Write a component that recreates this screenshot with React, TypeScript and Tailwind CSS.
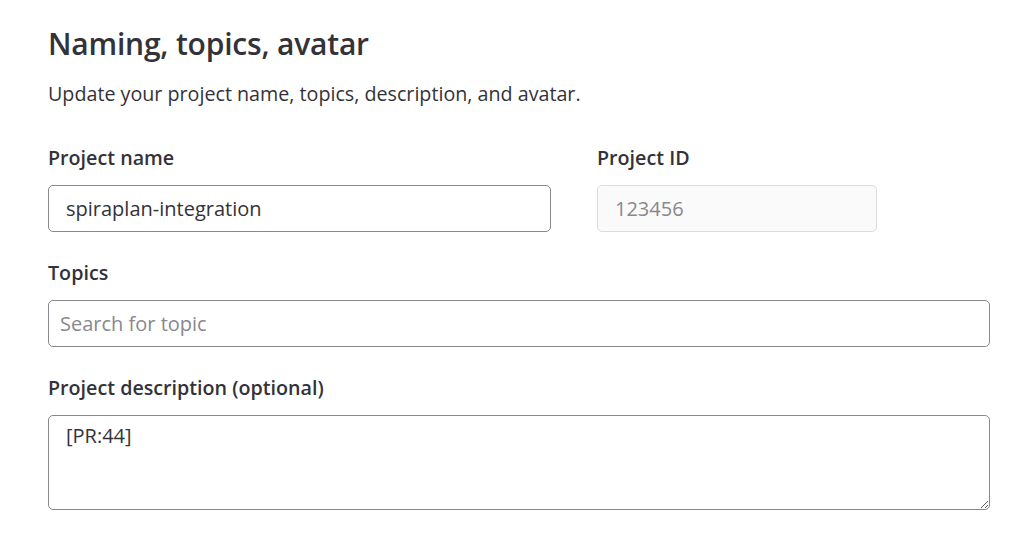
import React from 'react'

const font = { fontFamily: '"Open Sans", "Noto Sans", Arial, sans-serif' }

export default function App() {
  return (
    <div className="min-h-[534px] bg-white text-[#333238] pl-[48px] pr-[30px] pt-[24px]" style={font}>
      <h2 className="text-[30px] font-semibold leading-[40px] tracking-[-0.2px]">Naming, topics, avatar</h2>
      <p className="mt-[16px] text-[19.7px] leading-[28px]">Update your project name, topics, description, and avatar.</p>

      <div className="mt-[36px] flex gap-[46px]">
        <div className="w-[503px] flex flex-col">
          <label className="text-[19.7px] font-semibold leading-[28px]">Project name</label>
          <input
            readOnly
            value="spiraplan-integration"
            className="mt-[13px] h-[47px] rounded-[5px] border border-[#89888d] px-[17px] text-[20px] text-[#333238] outline-none"
          />
        </div>
        <div className="w-[280px] flex flex-col">
          <label className="text-[19.7px] font-semibold leading-[28px]">Project ID</label>
          <input
            readOnly
            value="123456"
            className="mt-[13px] h-[47px] rounded-[5px] border border-[#dcdcde] bg-[#fafafa] px-[17px] text-[20px] text-[#89888d] outline-none"
          />
        </div>
      </div>

      <div className="mt-[27px] flex flex-col">
        <label className="text-[19.7px] font-semibold leading-[28px]">Topics</label>
        <input
          readOnly
          placeholder="Search for topic"
          className="mt-[13px] h-[47px] rounded-[5px] border border-[#89888d] px-[11px] text-[20px] placeholder:text-[#89888d] outline-none"
        />
      </div>

      <div className="mt-[27px] flex flex-col">
        <label className="text-[19.7px] font-semibold leading-[28px]">Project description (optional)</label>
        <textarea
          readOnly
          value="[PR:44]"
          className="mt-[13px] h-[95px] rounded-[5px] border border-[#89888d] px-[17px] pt-[6px] pb-[9px] text-[20px] leading-[28px] text-[#333238] outline-none"
        />
      </div>
    </div>
  )
}
